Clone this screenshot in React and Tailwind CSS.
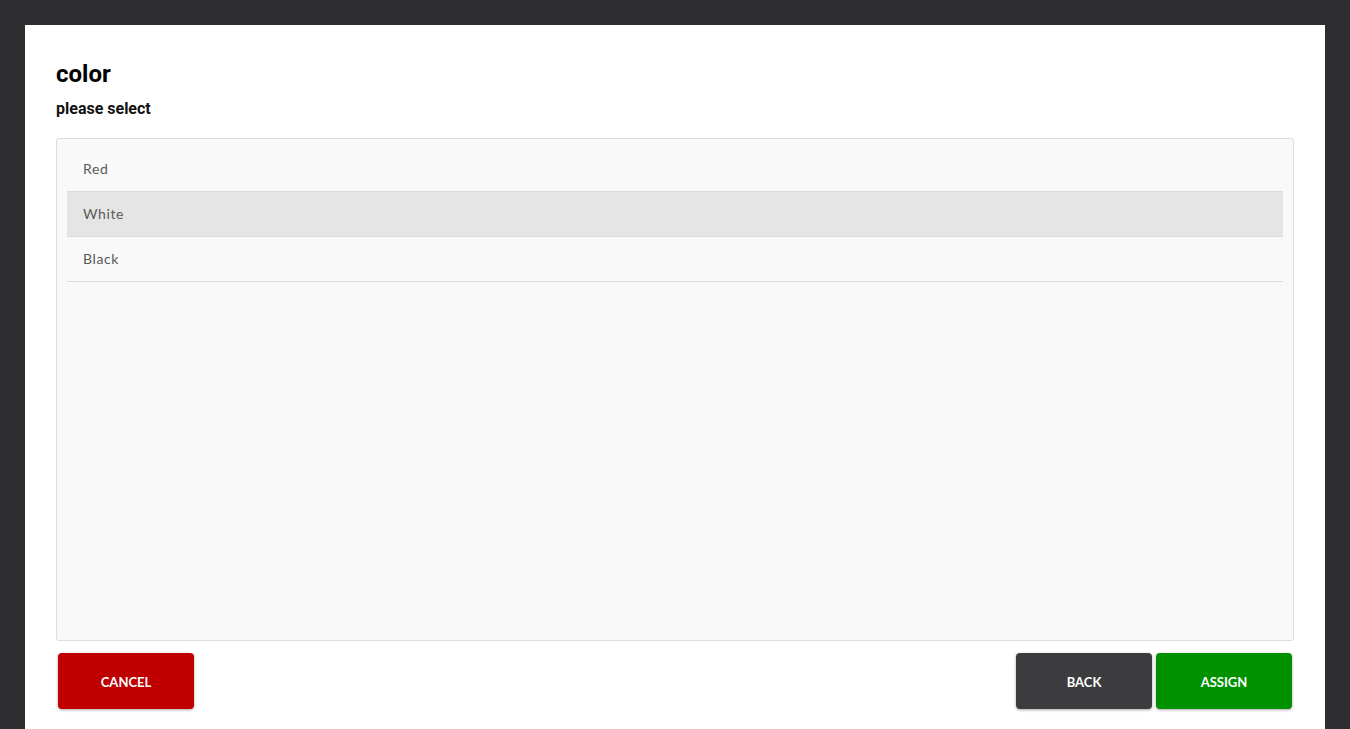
import { useState } from 'react';

const colors = ['Red', 'White', 'Black'];

export default function App() {
  const [selected, setSelected] = useState('White');

  return (
    <div className="min-h-screen bg-[#2e2e30] px-[25px] pt-[25px] font-['Roboto',sans-serif]">
      <div className="bg-white min-h-[704px] px-[31px] pt-[34px] flex flex-col">
        {/* Header */}
        <h1 className="text-[24px] leading-[30px] font-bold text-black">color</h1>
        <p className="mt-[9px] text-[16px] leading-[22px] font-bold text-[#111]">please select</p>

        {/* Options */}
        <div className="mt-[18px] h-[503px] bg-[#f9f9f9] border border-[#dcdcdc] rounded-[3px] px-[10px] pt-[8px]">
          {colors.map((c) => (
            <div
              key={c}
              onClick={() => setSelected(c)}
              className={`h-[45px] flex items-center pl-[16px] pb-[2px] border-b border-[#dcdcdc] text-[14px] text-[#5a5a5a] font-['Lato',sans-serif] tracking-[0.6px] cursor-pointer ${
                selected === c ? 'bg-[#e5e5e5]' : ''
              }`}
            >
              {c}
            </div>
          ))}
        </div>

        {/* Actions */}
        <div className="flex justify-between mt-[12px] px-[2px]">
          <button className="w-[136px] h-[56px] pt-[3px] bg-[#c00000] rounded-[4px] shadow-[0_1px_3px_rgba(0,0,0,0.35)] text-white text-[13px] font-bold font-['Lato',sans-serif]">
            CANCEL
          </button>
          <div className="flex gap-[4px]">
            <button className="w-[136px] h-[56px] pt-[3px] bg-[#3c3c3e] rounded-[4px] shadow-[0_1px_3px_rgba(0,0,0,0.35)] text-white text-[13px] font-bold font-['Lato',sans-serif]">
              BACK
            </button>
            <button className="w-[136px] h-[56px] pt-[3px] bg-[#009100] rounded-[4px] shadow-[0_1px_3px_rgba(0,0,0,0.35)] text-white text-[13px] font-bold font-['Lato',sans-serif]">
              ASSIGN
            </button>
          </div>
        </div>
      </div>
    </div>
  );
}
